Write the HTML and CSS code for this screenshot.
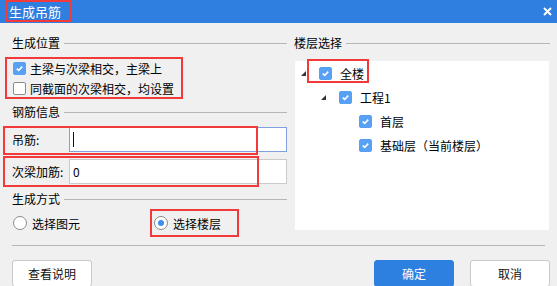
FILE: index.html
```html
<!DOCTYPE html>
<html lang="zh-CN">
<head>
<meta charset="UTF-8" />
<title>生成吊筋</title>
<link rel="stylesheet" href="styles.css">
</head>
<body>

<div class="dialog">
  <div class="titlebar">
    <span class="title">生成吊筋</span>
    <svg class="close" width="9" height="9" viewBox="0 0 9 9"><path d="M1 1 L8 8 M8 1 L1 8" stroke="#fff" stroke-width="2" fill="none"/></svg>
  </div>

  <div class="body">
    <div class="col-left">
      <div class="group-head"><span>生成位置</span><i></i></div>
      <label class="check-row first">
        <span class="cb on"><svg viewBox="0 0 13 13"><path d="M3.3 6.6 L5.6 8.8 L9.7 4.3" stroke="#fff" stroke-width="1.9" fill="none"/></svg></span>
        主梁与次梁相交，主梁上
      </label>
      <label class="check-row">
        <span class="cb"></span>
        同截面的次梁相交，均设置
      </label>

      <div class="group-head gap-6"><span>钢筋信息</span><i></i></div>
      <div class="field">
        <span class="field-label">吊筋:</span>
        <div class="input focused"><span class="caret"></span></div>
      </div>
      <div class="field">
        <span class="field-label">次梁加筋:</span>
        <div class="input">0</div>
      </div>

      <div class="group-head gap-7"><span>生成方式</span><i></i></div>
      <div class="radio-row">
        <label class="radio-item"><span class="rb"></span>选择图元</label>
        <label class="radio-item"><span class="rb on"></span>选择楼层</label>
      </div>
    </div>

    <div class="col-right">
      <div class="group-head"><span>楼层选择</span><i></i></div>
      <div class="tree">
        <div class="node lv0"><span class="tw open"></span><span class="cb on"><svg viewBox="0 0 13 13"><path d="M3.3 6.6 L5.6 8.8 L9.7 4.3" stroke="#fff" stroke-width="1.9" fill="none"/></svg></span><span class="node-text">全楼</span></div>
        <div class="node lv1"><span class="tw open"></span><span class="cb on"><svg viewBox="0 0 13 13"><path d="M3.3 6.6 L5.6 8.8 L9.7 4.3" stroke="#fff" stroke-width="1.9" fill="none"/></svg></span><span class="node-text">工程1</span></div>
        <div class="node lv2"><span class="tw"></span><span class="cb on"><svg viewBox="0 0 13 13"><path d="M3.3 6.6 L5.6 8.8 L9.7 4.3" stroke="#fff" stroke-width="1.9" fill="none"/></svg></span><span class="node-text">首层</span></div>
        <div class="node lv2"><span class="tw"></span><span class="cb on"><svg viewBox="0 0 13 13"><path d="M3.3 6.6 L5.6 8.8 L9.7 4.3" stroke="#fff" stroke-width="1.9" fill="none"/></svg></span><span class="node-text">基础层（当前楼层）</span></div>
      </div>
    </div>
  </div>

  <div class="sep"></div>

  <div class="footer">
    <button class="btn">查看说明</button>
    <button class="btn primary push">确定</button>
    <button class="btn">取消</button>
  </div>

  <!-- red annotation boxes -->
  <div class="mark mark-title"></div>
  <div class="mark mark-checks"></div>
  <div class="mark mark-hang"></div>
  <div class="mark mark-extra"></div>
  <div class="mark mark-all"></div>
  <div class="mark mark-floor"></div>
</div>

</body>
</html>
```

FILE: styles.css
```css
* {
  box-sizing: border-box;
}
body {
  margin: 0;
  font-family: "Noto Sans CJK SC", "Liberation Sans", sans-serif;
  font-size: 12px;
  color: #000;
  text-spacing-trim: space-all;
}
.dialog {
  position: relative;
  width: 557px;
  height: 286px;
  background: #f0f0f0;
  overflow: hidden;
}

/* title bar */
.titlebar {
  height: 23px;
  background: #2e7fdf;
  color: #fff;
  display: flex;
  align-items: center;
  padding: 0 5px 0 9px;
}
.title {
  font-size: 13px;
  line-height: 23px;
  flex: 1;
}
.close {
  display: block;
  margin-top: -1px;
}

/* two columns */
.body {
  display: flex;
  gap: 7px;
  padding: 12px 7px 0 12px;
}
.col-left {
  width: 275px;
}
.col-right {
  flex: 1;
}
.group-head {
  display: flex;
  align-items: center;
  height: 16px;
  line-height: 16px;
}
.group-head i {
  flex: 1;
  height: 1px;
  background: #b6b6b6;
  margin-left: 4px;
}
.gap-6 { margin-top: 6px; }
.gap-7 { margin-top: 7px; }

/* checkboxes */
.cb {
  width: 13px;
  height: 13px;
  flex: none;
  border: 1px solid #8d8d8d;
  border-radius: 2px;
  background: #fff;
  display: block;
}
.cb.on {
  background: #57a0f4;
  border-color: #57a0f4;
}
.cb svg {
  display: block;
  width: 11px;
  height: 11px;
}
.check-row {
  display: flex;
  align-items: center;
  gap: 4px;
  height: 20px;
  padding-left: 1px;
}
.check-row.first {
  margin-top: 7px;
}

/* inputs */
.field {
  display: flex;
  align-items: center;
  margin-top: 7px;
}
.field-label {
  width: 57px;
}
.input {
  flex: 1;
  height: 25px;
  background: #fff;
  border: 1px solid #cacaca;
  padding-left: 3px;
  display: flex;
  align-items: center;
}
.input.focused {
  border-color: #7fa2de;
}
.caret {
  width: 1px;
  height: 15px;
  background: #111;
}

/* radios */
.radio-row {
  display: flex;
  margin-top: 6px;
  height: 20px;
  padding-left: 1px;
}
.radio-item {
  display: flex;
  align-items: center;
  gap: 5px;
}
.radio-item:first-child {
  width: 141px;
}
.rb {
  width: 14px;
  height: 14px;
  border: 1px solid #8a8a8a;
  border-radius: 50%;
  background: #fff;
  display: flex;
  align-items: center;
  justify-content: center;
}
.rb.on::after {
  content: "";
  width: 6px;
  height: 6px;
  border-radius: 50%;
  background: #3f8ff0;
}

/* tree */
.tree {
  margin: 10px 1px 0 1px;
  height: 169px;
  background: #fff;
}
.node {
  display: flex;
  align-items: center;
  height: 24px;
}
.lv0 { padding-left: 6px; }
.lv1 { padding-left: 26px; }
.lv2 { padding-left: 46px; }
.tw {
  width: 18px;
  height: 6px;
  flex: none;
  margin-top: 2px;
}
.tw.open::before {
  content: "";
  display: block;
  width: 0;
  height: 0;
  border-left: 5px solid transparent;
  border-bottom: 5px solid #333;
}
.node-text {
  margin-left: 8px;
}

/* bottom */
.sep {
  height: 1px;
  background: #b6b6b6;
  margin: 12px 12px 0 12px;
}
.footer {
  display: flex;
  gap: 16px;
  padding: 14px 7px 0 12px;
}
.btn {
  width: 80px;
  height: 27px;
  background: #fff;
  border: 1px solid #c9c9c9;
  border-radius: 3px;
  font-family: inherit;
  font-size: 12px;
  color: #111;
  padding: 0;
}
.btn.primary {
  background: #2e80e0;
  border-color: #2e80e0;
  color: #fff;
}
.push {
  margin-left: auto;
}

/* red annotation frames */
.mark {
  position: absolute;
  border: 2px solid #f23a3a;
}
.mark-title  { left: 6px;   top: 0;     width: 65px;  height: 22px; }
.mark-checks { left: 5px;   top: 57px;  width: 178px; height: 42px; }
.mark-hang   { left: 3px;   top: 126px; width: 255px; height: 29px; }
.mark-extra  { left: 3px;   top: 156px; width: 256px; height: 31px; }
.mark-all    { left: 307px; top: 59px;  width: 62px;  height: 24px; }
.mark-floor  { left: 150px; top: 209px; width: 89px;  height: 28px; }
```
